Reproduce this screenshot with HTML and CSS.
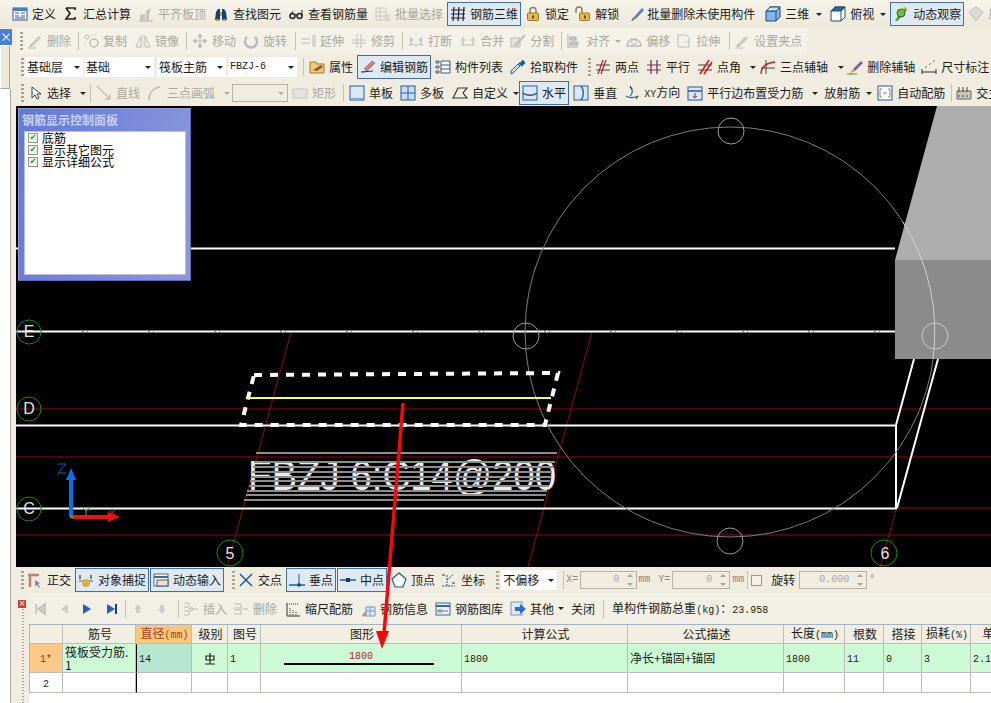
FILE: index.html
```html
<!DOCTYPE html>
<html lang="zh">
<head>
<meta charset="utf-8">
<title>钢筋三维</title>
<link rel="stylesheet" href="styles.css">
</head>
<body>
<svg class="defs" aria-hidden="true">
<defs>
<symbol id="def" viewBox="0 0 16 16"><rect x="1" y="2" width="14" height="12" fill="#fff" stroke="#2a5a9a"/><rect x="1" y="2" width="14" height="3" fill="#4a80c8"/><path d="M3 7h4M3 10h4M9 7h4M9 10h4M3 12h10" stroke="#2a5a9a"/></symbol>
<symbol id="sum" viewBox="0 0 16 16"><path d="M3 2h9v2M11 13H3l4-5.500L3 2M3 13h9v-2" fill="none" stroke="#222" stroke-width="1.700"/></symbol>
<symbol id="alg" viewBox="0 0 16 16"><path d="M2 14V9l5-1V14zM8 14V5l5-3-2 6v6z" fill="#c4c4bc"/><path d="M1 15h14" stroke="#aaa"/></symbol>
<symbol id="bin" viewBox="0 0 16 16"><path d="M2 14l1-8 2-3h2v11zM14 14l-1-8-2-3H9v11z" fill="#1c3f7c"/><path d="M7 6h2v4H7z" fill="#e0a040"/><path d="M3 14h3M10 14h3" stroke="#d09030" stroke-width="2"/></symbol>
<symbol id="gls" viewBox="0 0 16 16"><circle cx="4.500" cy="10" r="2.500" fill="none" stroke="#222" stroke-width="1.500"/><circle cx="11.500" cy="10" r="2.500" fill="none" stroke="#222" stroke-width="1.500"/><path d="M7 9h2M2 10l3-5M14 10V4" stroke="#222"/></symbol>
<symbol id="bat" viewBox="0 0 16 16"><path d="M1 2h10v12H1zM1 6h10M1 10h10M5 2v12" fill="none" stroke="#c8c8c0"/><path d="M10 8h5v7h-5z" fill="#d8d8d0"/></symbol>
<symbol id="grd" viewBox="0 0 16 16"><path d="M1 4h14M1 8h14M1 12h14M4 1l-1 14M9 1L8 15M14 1l-1 14" fill="none" stroke="#223" stroke-width="1.200"/></symbol>
<symbol id="lck" viewBox="0 0 16 16"><path d="M5 7V4.500a3 3 0 0 1 6 0V7" fill="none" stroke="#8a8060" stroke-width="1.500"/><rect x="2.500" y="7" width="11" height="7.500" rx="1" fill="#e8b850" stroke="#a07820"/><rect x="7" y="9.500" width="2" height="3" fill="#704810"/></symbol>
<symbol id="ulk" viewBox="0 0 16 16"><path d="M1 7V4a3 3 0 0 1 6 0v3" fill="none" stroke="#8a8060" stroke-width="1.500"/><rect x="4.500" y="7" width="10" height="7.500" rx="1" fill="#e8b850" stroke="#a07820"/><rect x="9" y="9.500" width="2" height="3" fill="#704810"/></symbol>
<symbol id="brs" viewBox="0 0 16 16"><path d="M5 11l8-9 2 2-8 9z" fill="#5f7fb8"/><path d="M5 11l2 2-5 2z" fill="#c89048"/><path d="M3 15l2-4" stroke="#555"/></symbol>
<symbol id="cub" viewBox="0 0 16 16"><path d="M1 5l4-4h10v10l-4 4H1z" fill="#7fb8e8" stroke="#234a7a"/><path d="M1 5h10v10M11 5l4-4" fill="none" stroke="#234a7a"/><path d="M5 1h10l-4 4H1z" fill="#bfe0f8" stroke="#234a7a"/></symbol>
<symbol id="cb2" viewBox="0 0 16 16"><path d="M5 1h10v10l-4 4H1V5z" fill="#fff" stroke="#234a7a"/><path d="M5 1h10l-4 4H1z" fill="#2a66aa" stroke="#234a7a"/><path d="M11 5v10M11 5l4-4" stroke="#234a7a" fill="none"/></symbol>
<symbol id="orb" viewBox="0 0 16 16"><path d="M2 15C4 12 5 7 13 2l1 2C9 9 7 13 4 15z" fill="#4aa030"/><circle cx="8" cy="7" r="4" fill="#6cc040" stroke="#2a6a20"/><path d="M10 3l3-1" stroke="#d0b020" stroke-width="2"/></symbol>
<symbol id="g3d" viewBox="0 0 16 16"><path d="M8 1l7 5-7 9-7-9z" fill="#dcdcd4" stroke="#c0c0b8"/></symbol>
<symbol id="gdl" viewBox="0 0 16 16"><path d="M4 11l8-8 2 2-8 8z" fill="#c8c8c0"/><path d="M1 15h8" stroke="#bbb"/><path d="M4 11l2 2-4 1z" fill="#aaa"/></symbol>
<symbol id="gcp" viewBox="0 0 16 16"><circle cx="4" cy="4" r="2" fill="none" stroke="#bbb"/><circle cx="11" cy="10" r="4" fill="none" stroke="#bbb" stroke-width="1.500"/><path d="M8 2h6M2 9v4" stroke="#ccc" stroke-dasharray="1 1"/></symbol>
<symbol id="gmr" viewBox="0 0 16 16"><path d="M6 3v11H1zM10 3v11h5z" fill="none" stroke="#bbb"/><path d="M8 1v14" stroke="#ccc" stroke-dasharray="2 1"/></symbol>
<symbol id="gmv" viewBox="0 0 16 16"><path d="M8 1v14M1 8h14M8 1L6 4h4zM8 15l-2-3h4zM1 8l3-2v4zM15 8l-3-2v4z" fill="#bbb" stroke="#bbb"/></symbol>
<symbol id="grt" viewBox="0 0 16 16"><path d="M4 4a6 6 0 1 0 8 0" fill="none" stroke="#bbb" stroke-width="2.500"/></symbol>
<symbol id="gex" viewBox="0 0 16 16"><path d="M1 6h9M1 10h9M13 2v12M15 2v12" stroke="#bbb"/></symbol>
<symbol id="gtr" viewBox="0 0 16 16"><path d="M1 7h14M1 10h14M6 1v14M10 1v14" stroke="#c0c0c0"/></symbol>
<symbol id="gbk" viewBox="0 0 16 16"><path d="M1 12h14M3 4v8M13 4v8M1 7h5M10 7h5" stroke="#bbb" stroke-width="1.200"/></symbol>
<symbol id="gsp" viewBox="0 0 16 16"><path d="M1 5h9v9H1z" fill="#e4e4dc" stroke="#bbb"/><path d="M4 12L14 2l1 1L6 13" fill="#c8c8c0" stroke="#bbb"/></symbol>
<symbol id="gal" viewBox="0 0 16 16"><path d="M2 1v14M2 14h10M4 4h6v3H4zM4 9h8v3H4z" fill="#ccc" stroke="#aaa"/></symbol>
<symbol id="gof" viewBox="0 0 16 16"><path d="M1 13a7 7 0 0 1 14 0z" fill="none" stroke="#bbb" stroke-width="1.500"/><circle cx="8" cy="9" r="2.500" fill="none" stroke="#bbb"/></symbol>
<symbol id="gst" viewBox="0 0 16 16"><path d="M2 2h8l3 3v9H2z" fill="none" stroke="#bbb"/><path d="M7 9h7M12 12l2-3-2-2" fill="none" stroke="#ccc"/></symbol>
<symbol id="prp" viewBox="0 0 16 16"><path d="M1 3h6l1 2h7v9H1z" fill="#f0c878" stroke="#a87830"/><path d="M4 11l8-5 2 2-6 4z" fill="#8a6030"/></symbol>
<symbol id="edt" viewBox="0 0 16 16"><path d="M4 10l8-8 3 2-8 8z" fill="#d08080" stroke="#805050" stroke-width=".5"/><path d="M1 13c4 0 8-1 12-1" stroke="#333" stroke-width="1.200" fill="none"/></symbol>
<symbol id="lst" viewBox="0 0 16 16"><path d="M6 2h9v12H6zM6 6h9M6 10h9" fill="#fff" stroke="#3a5a88"/><path d="M1 2h3v2H1zM1 7h3v2H1zM1 12h3v2H1z" fill="none" stroke="#556"/></symbol>
<symbol id="pck" viewBox="0 0 16 16"><path d="M1 15l2-1 7-7-2-2-7 7z" fill="#bfe0f8" stroke="#2a66aa"/><path d="M8 4l4 4 1-2 2-1V3l-2-2-1 0-1 2z" fill="#1f5ca8"/></symbol>
<symbol id="tpt" viewBox="0 0 16 16"><path d="M1 6h14M1 11h14" stroke="#444"/><path d="M6 15L11 1M3 15L8 1" stroke="#a02828" stroke-width="1.200"/></symbol>
<symbol id="prl" viewBox="0 0 16 16"><path d="M1 6h14M1 11h14" stroke="#a02828" stroke-width="1.200"/><path d="M5 1v14M11 1v14" stroke="#3a3a7a" stroke-width="1.200"/></symbol>
<symbol id="ang" viewBox="0 0 16 16"><path d="M1 6h14M1 11h14" stroke="#444"/><path d="M3 15L12 1M7 15L15 3" stroke="#c02020" stroke-width="1.500"/></symbol>
<symbol id="tax" viewBox="0 0 16 16"><path d="M1 15C1 8 6 4 15 3" fill="none" stroke="#d02020" stroke-width="1.300"/><path d="M6 1v14M1 9h14" stroke="#444"/></symbol>
<symbol id="dax" viewBox="0 0 16 16"><path d="M6 10l8-8 2 2-8 8z" fill="#8060a0"/><path d="M6 10l2 2-6 3z" fill="#e0a040"/><path d="M0 15h10" stroke="#4a9030"/></symbol>
<symbol id="dim" viewBox="0 0 16 16"><path d="M1 10v5M15 10v5M1 13h14" stroke="#333"/><path d="M4 9l2-2M8 6l2-2M12 3l2-2" stroke="#333" stroke-dasharray="1 1"/></symbol>
<symbol id="cur" viewBox="0 0 16 16"><path d="M5 2v11l3-3 2 4 2-1-2-4h4z" fill="#fff" stroke="#345"/></symbol>
<symbol id="gln" viewBox="0 0 16 16"><path d="M1 1l13 13M14 14V9M14 14H9" fill="none" stroke="#bbb" stroke-width="1.300"/></symbol>
<symbol id="gac" viewBox="0 0 16 16"><path d="M2 15C2 8 6 3 13 2" fill="none" stroke="#bbb" stroke-width="1.500"/></symbol>
<symbol id="grc" viewBox="0 0 16 16"><rect x="1" y="4" width="14" height="9" fill="#e4e4dc" stroke="#c8c8c0"/></symbol>
<symbol id="sgl" viewBox="0 0 16 16"><rect x="1" y="1" width="14" height="14" fill="#d8e8f8" stroke="#2a5a9a"/><path d="M2 14h12" stroke="#7aa8d8" stroke-width="2"/></symbol>
<symbol id="mul" viewBox="0 0 16 16"><rect x="1" y="1" width="14" height="14" fill="#c8dcf4" stroke="#2a5a9a"/><path d="M8 1v14M1 8h14" stroke="#2a5a9a"/></symbol>
<symbol id="cst" viewBox="0 0 16 16"><path d="M1 13L6 3h9l-4 5 4 5z" fill="none" stroke="#333" stroke-width="1.200"/></symbol>
<symbol id="hrz" viewBox="0 0 16 16"><rect x="1" y="1" width="14" height="14" fill="#d8e8f8" stroke="#2a5a9a"/><path d="M1 8c3 3 11 3 14 0" fill="none" stroke="#2a5a9a" stroke-width="1.300"/></symbol>
<symbol id="vrt" viewBox="0 0 16 16"><rect x="1" y="1" width="14" height="14" fill="#d8e8f8" stroke="#2a5a9a"/><path d="M8 1c3 3 3 11 0 14" fill="none" stroke="#2a5a9a" stroke-width="1.300"/></symbol>
<symbol id="xyd" viewBox="0 0 16 16"><path d="M6 2c3 2 3 7 0 9M2 11c3 2 8 2 12 0" fill="none" stroke="#2a5a9a" stroke-width="1.200"/><path d="M6 1l2 3M14 11l-2 3" stroke="#333"/></symbol>
<symbol id="pbr" viewBox="0 0 16 16"><rect x="1" y="2" width="14" height="13" fill="#d8e8f8" stroke="#2a5a9a"/><path d="M1 6h14" stroke="#2a5a9a" stroke-width="1.500"/><path d="M8 8v5M6 11l2 2 2-2" stroke="#a02828" fill="none"/></symbol>
<symbol id="ato" viewBox="0 0 16 16"><rect x="1" y="1" width="14" height="14" fill="#fff" stroke="#2a5a9a"/><path d="M5 4H3v8h2M11 4h2v8h-2M6 8h4" fill="none" stroke="#888"/></symbol>
<symbol id="crs" viewBox="0 0 16 16"><path d="M1 6h14v8H1z" fill="#c8c8b8" stroke="#666"/><path d="M3 2v5M7 2v5M11 2v5M3 10v2M7 10v2M11 10v2" stroke="#444"/></symbol>
<symbol id="ort" viewBox="0 0 16 16"><path d="M1 3h11M3 3v12" stroke="#c08078" stroke-width="2.500"/><path d="M8 8l5 3-2 1 2 3-1 1-2-3-2 1z" fill="#889"/></symbol>
<symbol id="snp" viewBox="0 0 16 16"><path d="M2 3v4M13 3v4" stroke="#555" stroke-width="1.500"/><path d="M1 9h14" stroke="#7a5020"/><circle cx="8" cy="11" r="4" fill="#d8b040"/></symbol>
<symbol id="dyn" viewBox="0 0 16 16"><rect x="1" y="2" width="14" height="12" fill="#fff" stroke="#4a6a8a"/><path d="M1 5h14" stroke="#4a6a8a" stroke-width="2"/><rect x="4" y="8" width="11" height="6" fill="#e8e4d8" stroke="#555"/></symbol>
<symbol id="cxp" viewBox="0 0 16 16"><path d="M2 2l12 12M14 2L2 14" stroke="#1f5a9a" stroke-width="1.500"/></symbol>
<symbol id="per" viewBox="0 0 16 16"><path d="M0 13h16" stroke="#1f5a9a" stroke-width="1.500"/><path d="M10 2v11" stroke="#1f5a9a"/><rect x="8.500" y="11.500" width="3" height="3" fill="#1f3a6a"/></symbol>
<symbol id="mid" viewBox="0 0 16 16"><path d="M0 8h16" stroke="#1f5a9a" stroke-width="1.500"/><rect x="6" y="6" width="4" height="4" fill="#1f3a6a"/></symbol>
<symbol id="vtx" viewBox="0 0 16 16"><path d="M8 1l7 6-3 8H4L1 7z" fill="#fff" stroke="#1f5a9a" stroke-width="1.200"/></symbol>
<symbol id="crd" viewBox="0 0 16 16"><path d="M6 3v11M1 14h13M6 8l6-5" stroke="#1f5a9a" stroke-dasharray="2 1"/><path d="M1 3h3M11 11h3" stroke="#333"/></symbol>
<symbol id="fst" viewBox="0 0 16 16"><path d="M4 3v10M13 3L6 8l7 5z" fill="#cfcfc8" stroke="#bbb" stroke-width="1.500"/></symbol>
<symbol id="prv" viewBox="0 0 16 16"><path d="M12 3L5 8l7 5z" fill="#cfcfc8"/></symbol>
<symbol id="nxt" viewBox="0 0 16 16"><path d="M4 3l8 5-8 5z" fill="#2a60b8"/></symbol>
<symbol id="lst2" viewBox="0 0 16 16"><path d="M3 3l8 5-8 5z" fill="#2a60b8"/><path d="M12 3v10" stroke="#1a3a8a" stroke-width="2"/></symbol>
<symbol id="upa" viewBox="0 0 16 16"><path d="M8 3l4 5H10v4H6V8H4z" fill="#ccc"/></symbol>
<symbol id="dna" viewBox="0 0 16 16"><path d="M8 13L4 8h2V4h4v4h2z" fill="#ccc"/></symbol>
<symbol id="ins" viewBox="0 0 16 16"><path d="M1 2h5v4H1M1 10h5v4H1M9 8h6M6 8l3-2v4z" fill="none" stroke="#bbb"/></symbol>
<symbol id="dlr" viewBox="0 0 16 16"><path d="M1 3h7v4H1M1 9h7v4H1M9 8h6" fill="none" stroke="#bbb"/></symbol>
<symbol id="scl" viewBox="0 0 16 16"><path d="M2 2v13h13" fill="none" stroke="#333"/><path d="M5 14V7M8 14V9M11 14v-3M4 3h9" stroke="#333" stroke-dasharray="1 1"/></symbol>
<symbol id="inf" viewBox="0 0 16 16"><path d="M2 14l9-9 2 2-9 9z" fill="#b09070"/><path d="M6 6h9v9H6z" fill="#d8e8f8" stroke="#7a98b8"/><path d="M10 6v9M6 10h9" stroke="#7a98b8"/></symbol>
<symbol id="lib" viewBox="0 0 16 16"><rect x="1" y="2" width="14" height="12" fill="#e8f0fa" stroke="#3a6a9a"/><path d="M1 5h14" stroke="#3a6a9a" stroke-width="2"/><path d="M3 9h4v2H3zM8 10h5" fill="none" stroke="#777"/></symbol>
<symbol id="oth" viewBox="0 0 16 16"><rect x="1" y="1" width="11" height="13" fill="#dce8f8" stroke="#7a98b8"/><path d="M5 6h5V3l6 5-6 5v-3H5z" fill="#2a70c8"/></symbol>
</defs>
</svg>

<div class="page">
  <div class="bar row1">
    <span class="it m12"><svg class="ic"><use href="#def"/></svg>定义</span>
    <span class="it m7"><svg class="ic"><use href="#sum"/></svg>汇总计算</span>
    <span class="it off m7"><svg class="ic"><use href="#alg"/></svg>平齐板顶</span>
    <span class="it m7"><svg class="ic"><use href="#bin"/></svg>查找图元</span>
    <span class="it m7"><svg class="ic"><use href="#gls"/></svg>查看钢筋量</span>
    <span class="it off m7"><svg class="ic"><use href="#bat"/></svg>批量选择</span>
    <span class="it on m4"><svg class="ic"><use href="#grd"/></svg>钢筋三维</span>
    <span class="it m4"><svg class="ic"><use href="#lck"/></svg>锁定</span>
    <span class="it m6"><svg class="ic"><use href="#ulk"/></svg>解锁</span>
    <span class="it tight m10"><svg class="ic"><use href="#brs"/></svg>批量删除未使用构件</span>
    <span class="it m10"><svg class="ic"><use href="#cub"/></svg>三维</span><i class="dd m7"></i>
    <span class="it m8"><svg class="ic"><use href="#cb2"/></svg>俯视</span><i class="dd m6"></i>
    <span class="it on m4"><svg class="ic"><use href="#orb"/></svg>动态观察</span>
    <span class="it off m4"><svg class="ic"><use href="#g3d"/></svg>局部三维</span>
  </div>

  <div class="work">
    <aside class="side">
      <div class="tab">×</div>
      <div class="tabbox"></div>
      <div class="sidefill"></div>
    </aside>

    <main class="main">
      <div class="bar"><div class="band">
        <i class="grip"></i>
        <span class="it off m4"><svg class="ic"><use href="#gdl"/></svg>删除</span><i class="sep m7"></i>
        <span class="it off m4"><svg class="ic"><use href="#gcp"/></svg>复制</span>
        <span class="it off m8"><svg class="ic"><use href="#gmr"/></svg>镜像</span><i class="sep m7"></i>
        <span class="it off m5"><svg class="ic"><use href="#gmv"/></svg>移动</span>
        <span class="it off m7"><svg class="ic"><use href="#grt"/></svg>旋转</span><i class="sep m8"></i>
        <span class="it off m4"><svg class="ic"><use href="#gex"/></svg>延伸</span>
        <span class="it off m7"><svg class="ic"><use href="#gtr"/></svg>修剪</span><i class="sep m7"></i>
        <span class="it off m5"><svg class="ic"><use href="#gbk"/></svg>打断</span>
        <span class="it off m8"><svg class="ic"><use href="#gbk"/></svg>合并</span>
        <span class="it off m6"><svg class="ic"><use href="#gsp"/></svg>分割</span><i class="sep m7"></i>
        <span class="it off m4"><svg class="ic"><use href="#gal"/></svg>对齐</span><i class="dd ddoff m5"></i>
        <span class="it off m5"><svg class="ic"><use href="#gof"/></svg>偏移</span>
        <span class="it off m6"><svg class="ic"><use href="#gst"/></svg>拉伸</span><i class="sep m9"></i>
        <span class="it off m4"><svg class="ic"><use href="#gdl"/></svg>设置夹点</span>
      </div></div>

      <div class="bar">
        <i class="grip g1"></i>
        <span class="combo c58 m1">基础层<i class="dd"></i></span>
        <span class="combo c70 m1">基础<i class="dd"></i></span>
        <span class="combo c69 m3">筏板主筋<i class="dd"></i></span>
        <span class="combo c69 m2"><span class="num">FBZJ-6</span><i class="dd"></i></span>
        <i class="sep m6"></i>
        <span class="it m5"><svg class="ic"><use href="#prp"/></svg>属性</span>
        <span class="it on m4"><svg class="ic"><use href="#edt"/></svg>编辑钢筋</span>
        <span class="it m4"><svg class="ic"><use href="#lst"/></svg>构件列表</span>
        <span class="it m7"><svg class="ic"><use href="#pck"/></svg>拾取构件</span>
        <i class="grip m10"></i>
        <span class="it m4"><svg class="ic"><use href="#tpt"/></svg>两点</span>
        <span class="it m7"><svg class="ic"><use href="#prl"/></svg>平行</span>
        <span class="it m7"><svg class="ic"><use href="#ang"/></svg>点角</span><i class="dd m9"></i>
        <span class="it m4"><svg class="ic"><use href="#tax"/></svg>三点辅轴</span><i class="dd m10"></i>
        <span class="it m3"><svg class="ic"><use href="#dax"/></svg>删除辅轴</span>
        <span class="it m6"><svg class="ic"><use href="#dim"/></svg>尺寸标注</span>
      </div>

      <div class="bar">
        <i class="grip g1"></i>
        <span class="it m3"><svg class="ic"><use href="#cur"/></svg>选择</span><i class="dd m9"></i><i class="sep m4"></i>
        <span class="it off m5"><svg class="ic"><use href="#gln"/></svg>直线</span>
        <span class="it off m7"><svg class="ic"><use href="#gac"/></svg>三点画弧</span><i class="dd ddoff m9"></i>
        <span class="combo cdis m2"><i class="dd ddoff"></i></span>
        <span class="it off m4"><svg class="ic"><use href="#grc"/></svg>矩形</span><i class="sep m7"></i>
        <span class="it m5"><svg class="ic"><use href="#sgl"/></svg>单板</span>
        <span class="it m7"><svg class="ic"><use href="#mul"/></svg>多板</span>
        <span class="it m8"><svg class="ic"><use href="#cst"/></svg>自定义</span><i class="dd m5"></i>
        <span class="it on"><svg class="ic"><use href="#hrz"/></svg>水平</span>
        <span class="it m4"><svg class="ic"><use href="#vrt"/></svg>垂直</span>
        <span class="it m7"><svg class="ic"><use href="#xyd"/></svg><span><span class="num">XY</span>方向</span></span>
        <span class="it m7"><svg class="ic"><use href="#pbr"/></svg>平行边布置受力筋</span><i class="dd m9"></i>
        <span class="plain m6">放射筋</span><i class="dd m6"></i>
        <span class="it m5"><svg class="ic"><use href="#ato"/></svg>自动配筋</span><i class="sep m6"></i>
        <span class="it m4"><svg class="ic"><use href="#crs"/></svg>交主筋</span>
      </div>

      <div class="canvas">
        <svg class="cad" viewBox="16 106 975 461">
          <g stroke="#8a0d0d" stroke-width="1">
            <path d="M16 409H991M16 457H991M16 535H991M895 508H991"/>
            <path d="M291 332L227 567M592 332L528 567M938 360L880 567"/>
          </g>
          <g stroke="#fff" stroke-width="2" fill="none">
            <path d="M16 248.500H895M16 331.500H895M16 425.500H896V508.500H16"/>
            <path d="M914 359L896 425M938 359L897 508"/>
          </g>
          <path d="M16 331.500H895" stroke="#000" stroke-width="2" stroke-dasharray="2 3 1 60" opacity=".35"/>
          <circle cx="730" cy="332" r="205" fill="none" stroke="#7c7c7c"/>
          <circle cx="731" cy="131" r="13" fill="none" stroke="#9a9a9a"/>
          <circle cx="526" cy="336" r="13" fill="none" stroke="#9a9a9a"/>
          <circle cx="730" cy="541" r="13" fill="none" stroke="#9a9a9a"/>
          <path d="M895 260L937 106H991V260z" fill="#adadad"/>
          <rect x="895" y="260" width="96" height="99" fill="#8b8b8b"/>
          <path d="M903 222A205 205 0 0 1 933 359" fill="none" stroke="#d0d0d0"/>
          <circle cx="935" cy="336" r="13" fill="none" stroke="#c8c8c8"/>
          <path d="M254 375L558 373L545 425H241z" fill="none" stroke="#fff" stroke-width="4" stroke-dasharray="8 8"/>
          <path d="M248 398H551" stroke="#ffff50" stroke-width="2"/>
          <text class="label" x="248" y="490" textLength="308" lengthAdjust="spacingAndGlyphs">FBZJ 6:C14@200</text>
          <g stroke="#8d8d8d" stroke-width="2">
            <path d="M256 453H557M254 462H555M253 467H553M252 472H552M251 477H551M250 481H550M249 486H549M247 491H547M246 495H546M244 500H544"/>
          </g>
          <g fill="none" stroke="#1a8a1a">
            <circle cx="29" cy="332" r="12"/><circle cx="29" cy="409" r="12"/><circle cx="29" cy="509" r="12"/><circle cx="230" cy="553" r="13"/><circle cx="884" cy="553" r="13"/>
          </g>
          <g class="axis">
            <text x="29" y="337">E</text><text x="29" y="414">D</text><text x="29" y="514">C</text><text x="230" y="559">5</text><text x="885" y="559">6</text>
          </g>
          <path d="M71 516V478" stroke="#0a70e8" stroke-width="4"/>
          <path d="M71 468l5 12H66z" fill="#0a70e8"/>
          <path d="M72 517H110" stroke="#f01010" stroke-width="4"/>
          <path d="M120 517l-12-5v10z" fill="#f01010"/>
          <path d="M58 464h8l-8 9h8" fill="none" stroke="#1a60b0"/>
          <path d="M82 507l4 4 4-4M86 511v5" fill="none" stroke="#30c030"/>
          <path d="M109 510l6 5m0-5l-6 5" fill="none" stroke="#c02020"/>
          <path d="M70 517h3" stroke="#20c040" stroke-width="2"/>
        </svg>
        <section class="panel">
          <h2 class="ptitle">钢筋显示控制面板</h2>
          <div class="pbody">
            <label class="chk"><i class="box">✔</i>底筋</label>
            <label class="chk"><i class="box">✔</i>显示其它图元</label>
            <label class="chk"><i class="box">✔</i>显示详细公式</label>
          </div>
        </section>
      </div>

      <div class="bar">
        <i class="grip g1"></i>
        <span class="it m3"><svg class="ic"><use href="#ort"/></svg>正交</span>
        <span class="it on m4"><svg class="ic"><use href="#snp"/></svg>对象捕捉</span>
        <span class="it on m1"><svg class="ic"><use href="#dyn"/></svg>动态输入</span>
        <i class="grip m8"></i>
        <span class="it m3"><svg class="ic"><use href="#cxp"/></svg>交点</span>
        <span class="it on m4"><svg class="ic"><use href="#per"/></svg>垂点</span>
        <span class="it on m1"><svg class="ic"><use href="#mid"/></svg>中点</span>
        <span class="it m4"><svg class="ic"><use href="#vtx"/></svg>顶点</span>
        <span class="it m6"><svg class="ic"><use href="#crd"/></svg>坐标</span>
        <i class="grip m11"></i>
        <span class="combo c56 m2">不偏移<i class="dd"></i></span>
        <i class="sep m6"></i>
        <span class="lbl m2">X=</span><span class="spin s57 m2">0<i class="arrows"></i></span><span class="lbl m1">mm</span>
        <span class="lbl m8">Y=</span><span class="spin s58 m2">0<i class="arrows"></i></span><span class="lbl m2">mm</span>
        <i class="sep m3"></i><i class="cbx m3"></i>
        <span class="plain m9">旋转</span>
        <span class="spin s68 m4">0.000<i class="arrows"></i></span><span class="lbl m2">°</span>
      </div>

      <div class="lower">
        <div class="gutter"><i class="closer">×</i><i class="dots"></i></div>
        <div class="content">
          <div class="bar row6">
            <span class="it m3"><svg class="ic"><use href="#fst"/></svg></span>
            <span class="it m8"><svg class="ic"><use href="#prv"/></svg></span>
            <span class="it m7"><svg class="ic"><use href="#nxt"/></svg></span>
            <span class="it m9"><svg class="ic"><use href="#lst2"/></svg></span>
            <i class="sep m5"></i>
            <span class="it m4"><svg class="ic"><use href="#upa"/></svg></span>
            <span class="it m8"><svg class="ic"><use href="#dna"/></svg></span>
            <i class="sep m8"></i>
            <span class="it off m4"><svg class="ic"><use href="#ins"/></svg>插入</span>
            <span class="it off m6"><svg class="ic"><use href="#dlr"/></svg>删除</span>
            <span class="it m8"><svg class="ic"><use href="#scl"/></svg>缩尺配筋</span>
            <span class="it m7"><svg class="ic"><use href="#inf"/></svg>钢筋信息</span>
            <span class="it m7"><svg class="ic"><use href="#lib"/></svg>钢筋图库</span>
            <span class="it m7"><svg class="ic"><use href="#oth"/></svg>其他</span><i class="dd m4"></i>
            <span class="plain m7">关闭</span>
            <i class="sep m8"></i>
            <span class="plain m8">单构件钢筋总重<span class="num">(kg)</span>：<span class="num">23.958</span></span>
          </div>
          <table class="grid">
            <thead>
              <tr><th></th><th>筋号</th><th class="hot">直径<span class="num">(mm)</span></th><th>级别</th><th>图号</th><th>图形</th><th>计算公式</th><th>公式描述</th><th>长度<span class="num">(mm)</span></th><th>根数</th><th>搭接</th><th>损耗<span class="num">(%)</span></th><th>单重<span class="num">(kg)</span></th></tr>
            </thead>
            <tbody>
              <tr class="cur">
                <td class="rn hotcell"><span class="num">1*</span></td>
                <td class="name">筏板受力筋.<br>1</td>
                <td class="sel bar-l"><span class="num">14</span></td>
                <td class="ctr"><svg class="grade" viewBox="0 0 12 12"><path d="M2 3h8v4H2zM6 0v11M1 11h10" fill="none" stroke="#222" stroke-width="1.200"/></svg></td>
                <td><span class="num">1</span></td>
                <td class="shape"><span class="num redn">1800</span><i class="rebar"></i></td>
                <td><span class="num">1800</span></td>
                <td>净长+锚固+锚固</td>
                <td><span class="num">1800</span></td>
                <td><span class="num">11</span></td>
                <td><span class="num">0</span></td>
                <td><span class="num">3</span></td>
                <td><span class="num">2.178</span></td>
              </tr>
              <tr>
                <td class="rn"><span class="num">2</span></td><td></td><td class="bar-l"></td><td></td><td></td><td></td><td></td><td></td><td></td><td></td><td></td><td></td><td></td>
              </tr>
            </tbody>
          </table>
        </div>
      </div>
    </main>
  </div>

  <svg class="overlay" viewBox="0 0 991 703" aria-hidden="true">
    <path d="M403 403L384 634" stroke="#f00a0a" stroke-width="3.500"/>
    <path d="M382 649l-6-18h13z" fill="#f00a0a"/>
  </svg>
</div>
</body>
</html>
```
FILE: styles.css
```css
* { box-sizing: border-box; }
html, body { margin: 0; padding: 0; }
body { width: 991px; height: 703px; overflow: hidden; font: 12px/14px "Noto Sans CJK SC", "Noto Sans", sans-serif; color: #1c1c1c; background: #f0ecdf; }
.defs { position: absolute; width: 0; height: 0; }
.page { position: relative; width: 991px; height: 703px; overflow: hidden; display: flex; flex-direction: column; }

.bar { height: 26px; flex: none; display: flex; align-items: center; white-space: nowrap; overflow: hidden; background: #f0ecdf; }
.row1 { height: 28px; background: linear-gradient(#f6f3e9, #ece8da); }
.band { height: 26px; display: flex; align-items: center; padding: 0 5px 0 4px; background: #f4f2e8; }

.it { display: inline-flex; align-items: center; gap: 4px; flex: none; height: 20px; }
.tight { gap: 2px; }
.ic { width: 16px; height: 16px; flex: none; }
.off { color: #a9a9a2; }
.on { height: 24px; padding: 0 2px; border: 1px solid #3f6ea8; background: #dfe9f4; }
.plain, .lbl { flex: none; }
.lbl { font: 10px/12px "Liberation Mono", monospace; color: #888; min-width: 12px; }

.num { font: 10px/12px "Liberation Mono", monospace; }
.dd { flex: none; width: 0; height: 0; border: 3px solid transparent; border-top-color: #222; border-bottom-width: 0; }
.ddoff { border-top-color: #aaa; }
.sep { flex: none; width: 1px; height: 18px; background: #c6c2b2; }
.grip { flex: none; width: 3px; height: 18px; background: repeating-linear-gradient(#a8a494 0 2px, transparent 2px 4px); }
.g1 { margin-left: 5px; }

.combo { flex: none; height: 20px; display: flex; align-items: center; justify-content: space-between; padding: 0 3px 0 2px; background: #fff; }
.c58 { width: 58px; }
.c70 { width: 70px; }
.c69 { width: 69px; }
.c56 { width: 56px; }
.cdis { width: 56px; height: 18px; background: #f0ecdf; border: 1px solid #b4b4a8; justify-content: flex-end; }

.spin { flex: none; height: 18px; display: flex; align-items: center; justify-content: flex-end; gap: 7px; padding-right: 3px; font: 10px/12px "Liberation Mono", monospace; color: #aaa; border: 1px solid #b4b4a8; background: #f0ecdf; }
.s57 { width: 57px; }
.s58 { width: 58px; }
.s68 { width: 68px; }
.arrows { width: 7px; height: 12px; display: flex; flex-direction: column; justify-content: space-between; align-items: center; }
.arrows::before, .arrows::after { content: ""; width: 0; height: 0; border: 3px solid transparent; }
.arrows::before { border-bottom-color: #a8a8a0; border-top-width: 0; }
.arrows::after { border-top-color: #a8a8a0; border-bottom-width: 0; }
.cbx { flex: none; width: 11px; height: 11px; border: 1px solid #9a9a90; background: #f4f2e8; }

.m1 { margin-left: 1px; } .m2 { margin-left: 2px; } .m3 { margin-left: 3px; } .m4 { margin-left: 4px; }
.m5 { margin-left: 5px; } .m6 { margin-left: 6px; } .m7 { margin-left: 7px; } .m8 { margin-left: 8px; }
.m9 { margin-left: 9px; } .m10 { margin-left: 10px; } .m11 { margin-left: 11px; } .m12 { margin-left: 12px; }

.work { flex: 1; display: flex; min-height: 0; }
.side { width: 16px; flex: none; display: flex; flex-direction: column; }
.tab { width: 12px; height: 16px; margin-top: 1px; background: #4a7fd8; color: #fff; font-size: 12px; line-height: 15px; text-align: center; }
.tabbox { width: 10px; height: 44px; background: #ece8da; border: 1px solid #fff; border-right-color: #a8a8a0; border-bottom-color: #a8a8a0; }
.sidefill { width: 11px; flex: 1; background: #fff; border-right: 1px solid #a8a8a4; }

.main { width: 975px; flex: none; display: flex; flex-direction: column; min-height: 0; }
.canvas { position: relative; height: 461px; flex: none; background: #000; overflow: hidden; }
.cad { display: block; width: 975px; height: 461px; }
.label { font: 42px "Liberation Sans", sans-serif; fill: #ececec; }
.axis text { font: 16px "Liberation Sans", sans-serif; fill: #e8e0e0; text-anchor: middle; }

.panel { position: absolute; left: 2px; top: 2px; width: 173px; height: 173px; padding: 0 4px 5px 5px; display: flex; flex-direction: column; background: linear-gradient(100deg, #6579d8, #8a98dc); border: 1px solid #8f9bd4; border-right-color: #5a69b8; border-bottom-color: #5a69b8; }
.ptitle { margin: 0 0 0 -2px; height: 22px; flex: none; font: bold 12px/22px "Noto Sans CJK SC", sans-serif; color: #c6d2f4; }
.pbody { flex: 1; padding: 0 3px; background: #fff; border: 1px solid #b8c0e0; }
.chk { height: 12px; display: flex; align-items: center; gap: 4px; font-size: 12px; line-height: 12px; color: #000; }
.box { width: 10px; height: 10px; flex: none; display: flex; align-items: center; justify-content: center; border: 1px solid #8a9a8a; background: #eef6ea; color: #2a8a3a; font: 8px/8px "DejaVu Sans", sans-serif; }

.lower { flex: 1; display: flex; min-height: 0; background: #f0ecdf; }
.gutter { width: 13px; flex: none; position: relative; padding-left: 6px; padding-top: 16px; }
.closer { position: absolute; left: 2px; top: 7px; width: 8px; height: 8px; background: #d04030; color: #fff; font: 8px/8px "DejaVu Sans", sans-serif; text-align: center; }
.dots { display: block; width: 2px; height: 100%; background: repeating-linear-gradient(#aaa698 0 1px, transparent 1px 3px); }
.content { width: 962px; flex: none; display: flex; flex-direction: column; overflow: hidden; background: #fff; border-left: 0; }
.row6 { height: 31px; background: #f2efe4; }

.grid { width: 1011px; table-layout: fixed; border-collapse: separate; border-spacing: 0; font-size: 12px; border-top: 1px solid #a4b4c4; border-left: 1px solid #b4b4b4; }
.grid th, .grid td { padding: 0 0 0 2px; overflow: hidden; white-space: nowrap; border-right: 1px solid #bcbcb8; border-bottom: 1px solid #bcbcb8; font-weight: normal; }
.grid th { height: 19px; text-align: center; background: #f1eee2; }
.grid tbody tr { height: 20px; }
.grid .cur { height: 29px; background: #ccfbd6; }
.grid th:nth-child(1) { width: 33px; }
.grid th:nth-child(2) { width: 73px; }
.grid th:nth-child(3) { width: 56px; }
.grid th:nth-child(4) { width: 36px; }
.grid th:nth-child(5) { width: 33px; }
.grid th:nth-child(6) { width: 201px; }
.grid th:nth-child(7) { width: 166px; }
.grid th:nth-child(8) { width: 156px; }
.grid th:nth-child(9) { width: 61px; }
.grid th:nth-child(10) { width: 39px; }
.grid th:nth-child(11) { width: 38px; }
.grid th:nth-child(12) { width: 49px; }
.grid th:nth-child(13) { width: 70px; }
.grid .hot { background: #f8c880; color: #b03a20; }
.grid .rn { text-align: center; padding: 0; }
.grid .hotcell { background: #fcc888; color: #a03020; }
.grid .name { line-height: 13px; }
.grid .sel { background: #b5e6d2; }
.grid .bar-l { border-left: 1px solid #000; padding-left: 2px; }
.grid .ctr { text-align: center; padding: 0; }
.grade { width: 12px; height: 12px; display: inline-block; vertical-align: middle; }
.grid .shape { text-align: center; padding: 7px 0 0; line-height: 11px; vertical-align: top; }
.redn { color: #c01818; display: block; }
.rebar { display: block; width: 150px; height: 2px; margin: 0 0 0 23px; background: #000; }

.overlay { position: absolute; left: 0; top: 0; width: 991px; height: 703px; pointer-events: none; }
```
